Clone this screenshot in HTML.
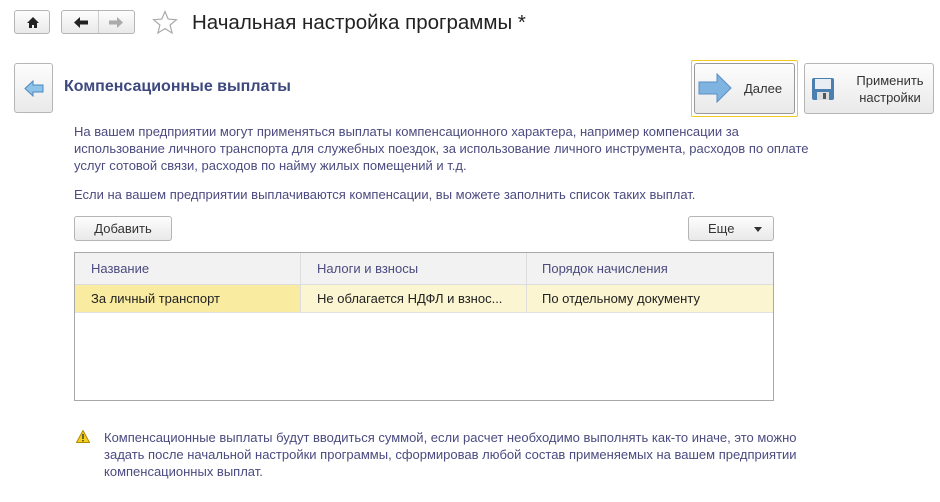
<!DOCTYPE html>
<html><head><meta charset="utf-8"><style>
*{box-sizing:border-box;margin:0;padding:0}
body{width:940px;height:502px;background:#fff;font-family:"Liberation Sans",Arial,sans-serif;position:relative;overflow:hidden;color:#333}
.a{position:absolute}
.btn{position:absolute;border:1px solid #b5b5b5;border-radius:3px;background:linear-gradient(#fdfdfd,#e9e9e9);}
.txt{color:#4b4b80;font-size:13px;line-height:17px}
</style></head><body>
<div class="btn" style="left:14px;top:10px;width:36px;height:24px"><svg class="a" style="left:11px;top:5px" width="14" height="13" viewBox="0 0 14 13"><path d="M7 1L1 7h2v5h3V9h2v3h3V7h2z" fill="#222"/></svg></div>
<div class="btn" style="left:61px;top:10px;width:74px;height:24px"><div class="a" style="left:36px;top:0;width:1px;height:22px;background:#ccc"></div>
<svg class="a" style="left:11px;top:5px" width="16" height="13" viewBox="0 0 16 13"><path d="M1 6.5L7 1v3.5h8v4H7V12z" fill="#222"/></svg>
<svg class="a" style="left:46px;top:5px" width="16" height="13" viewBox="0 0 16 13"><path d="M15 6.5L9 1v3.5H1v4h8V12z" fill="#aaa"/></svg></div>
<svg class="a" style="left:152px;top:10px" width="26" height="25" viewBox="0 0 26 25"><path d="M13 1.5l3.2 7.6 8.2.6-6.3 5.3 2 8-7.1-4.4-7.1 4.4 2-8L1.6 9.7l8.2-.6z" fill="none" stroke="#aaa" stroke-width="1.2"/></svg>
<div class="a" style="left:192px;top:11px;font-size:20.5px;color:#222">Начальная настройка программы *</div>
<div class="btn" style="left:14px;top:63px;width:39px;height:50px"><svg class="a" style="left:9px;top:16px" width="20" height="17" viewBox="0 0 20 17"><path d="M1 8.5L9 1v4h10v7H9v4z" fill="#8fc3e8" stroke="#4a88c0"/></svg></div>
<div class="a" style="left:64px;top:78px;font-size:16px;font-weight:bold;color:#3e4a7e">Компенсационные выплаты</div>
<div class="a" style="left:691px;top:60px;width:107px;height:57px;border:1px solid #f0c820;border-radius:2px"></div>
<div class="btn" style="left:694px;top:63px;width:101px;height:51px;border-color:#999">
<svg class="a" style="left:3px;top:9px" width="34" height="30" viewBox="0 0 34 30"><path d="M1 9h18V1l14 14-14 14v-8H1z" fill="#7fb3e0" stroke="#5a8fc4"/></svg>
<div class="a" style="left:49px;top:17px;font-size:13px;color:#333">Далее</div></div>
<div class="btn" style="left:804px;top:63px;width:130px;height:51px">
<svg class="a" style="left:6px;top:13px" width="24" height="24" viewBox="0 0 24 24"><rect x="1" y="1" width="22" height="22" rx="2" fill="#4a7fb0"/><rect x="4" y="2" width="16" height="10" fill="#e8eef4"/><rect x="6" y="15" width="12" height="8" fill="#ddd"/><rect x="12" y="16" width="3" height="6" fill="#555"/></svg>
<div class="a" style="left:42px;top:8px;width:86px;text-align:center;font-size:13px;line-height:17px;color:#333">Применить настройки</div></div>
<div class="a txt" style="left:74px;top:123px;width:740px">На вашем предприятии могут применяться выплаты компенсационного характера, например компенсации за использование личного транспорта для служебных поездок, за использование личного инструмента, расходов по оплате услуг сотовой связи, расходов по найму жилых помещений и т.д.</div>
<div class="a txt" style="left:74px;top:186px">Если на вашем предприятии выплачиваются компенсации, вы можете заполнить список таких выплат.</div>
<div class="btn" style="left:74px;top:216px;width:98px;height:25px;font-size:13px;text-align:center;line-height:23px;color:#333">Добавить</div>
<div class="btn" style="left:688px;top:216px;width:86px;height:25px;font-size:13px;line-height:23px;color:#333"><span class="a" style="left:19px">Еще</span><svg class="a" style="left:65px;top:10px" width="8" height="5"><path d="M0 0h8L4 5z" fill="#333"/></svg></div>
<div class="a" style="left:74px;top:252px;width:700px;height:149px;border:1px solid #a8a8a8">
<div class="a" style="left:0;top:0;width:698px;height:32px;background:#f2f2f2;border-bottom:1px solid #ddd"></div>
<div class="a" style="left:0;top:32px;width:698px;height:28px;background:#fbf5d2;border-bottom:1px solid #e2e2e2"></div>
<div class="a" style="left:0;top:32px;width:225px;height:27px;background:#f9eba0"></div>
<div class="a" style="left:225px;top:0;width:1px;height:59px;background:#ddd"></div>
<div class="a" style="left:451px;top:0;width:1px;height:59px;background:#ddd"></div>
<div class="a" style="left:16px;top:8px;font-size:13px;color:#4b4b80">Название</div>
<div class="a" style="left:242px;top:8px;font-size:13px;color:#4b4b80">Налоги и взносы</div>
<div class="a" style="left:467px;top:8px;font-size:13px;color:#4b4b80">Порядок начисления</div>
<div class="a" style="left:16px;top:38px;font-size:13px;color:#222">За личный транспорт</div>
<div class="a" style="left:242px;top:38px;font-size:13px;color:#222">Не облагается НДФЛ и взнос...</div>
<div class="a" style="left:467px;top:38px;font-size:13px;color:#222">По отдельному документу</div>
</div>
<svg class="a" style="left:76px;top:430px" width="14" height="13" viewBox="0 0 14 13"><path d="M7 .5L13.5 12.5H.5z" fill="#f5d020" stroke="#b08a00"/><rect x="6.3" y="4" width="1.4" height="5" fill="#333"/><rect x="6.3" y="10" width="1.4" height="1.4" fill="#333"/></svg>
<div class="a txt" style="left:104px;top:429px;width:705px">Компенсационные выплаты будут вводиться суммой, если расчет необходимо выполнять как-то иначе, это можно задать после начальной настройки программы, сформировав любой состав применяемых на вашем предприятии компенсационных выплат.</div>
</body></html>
